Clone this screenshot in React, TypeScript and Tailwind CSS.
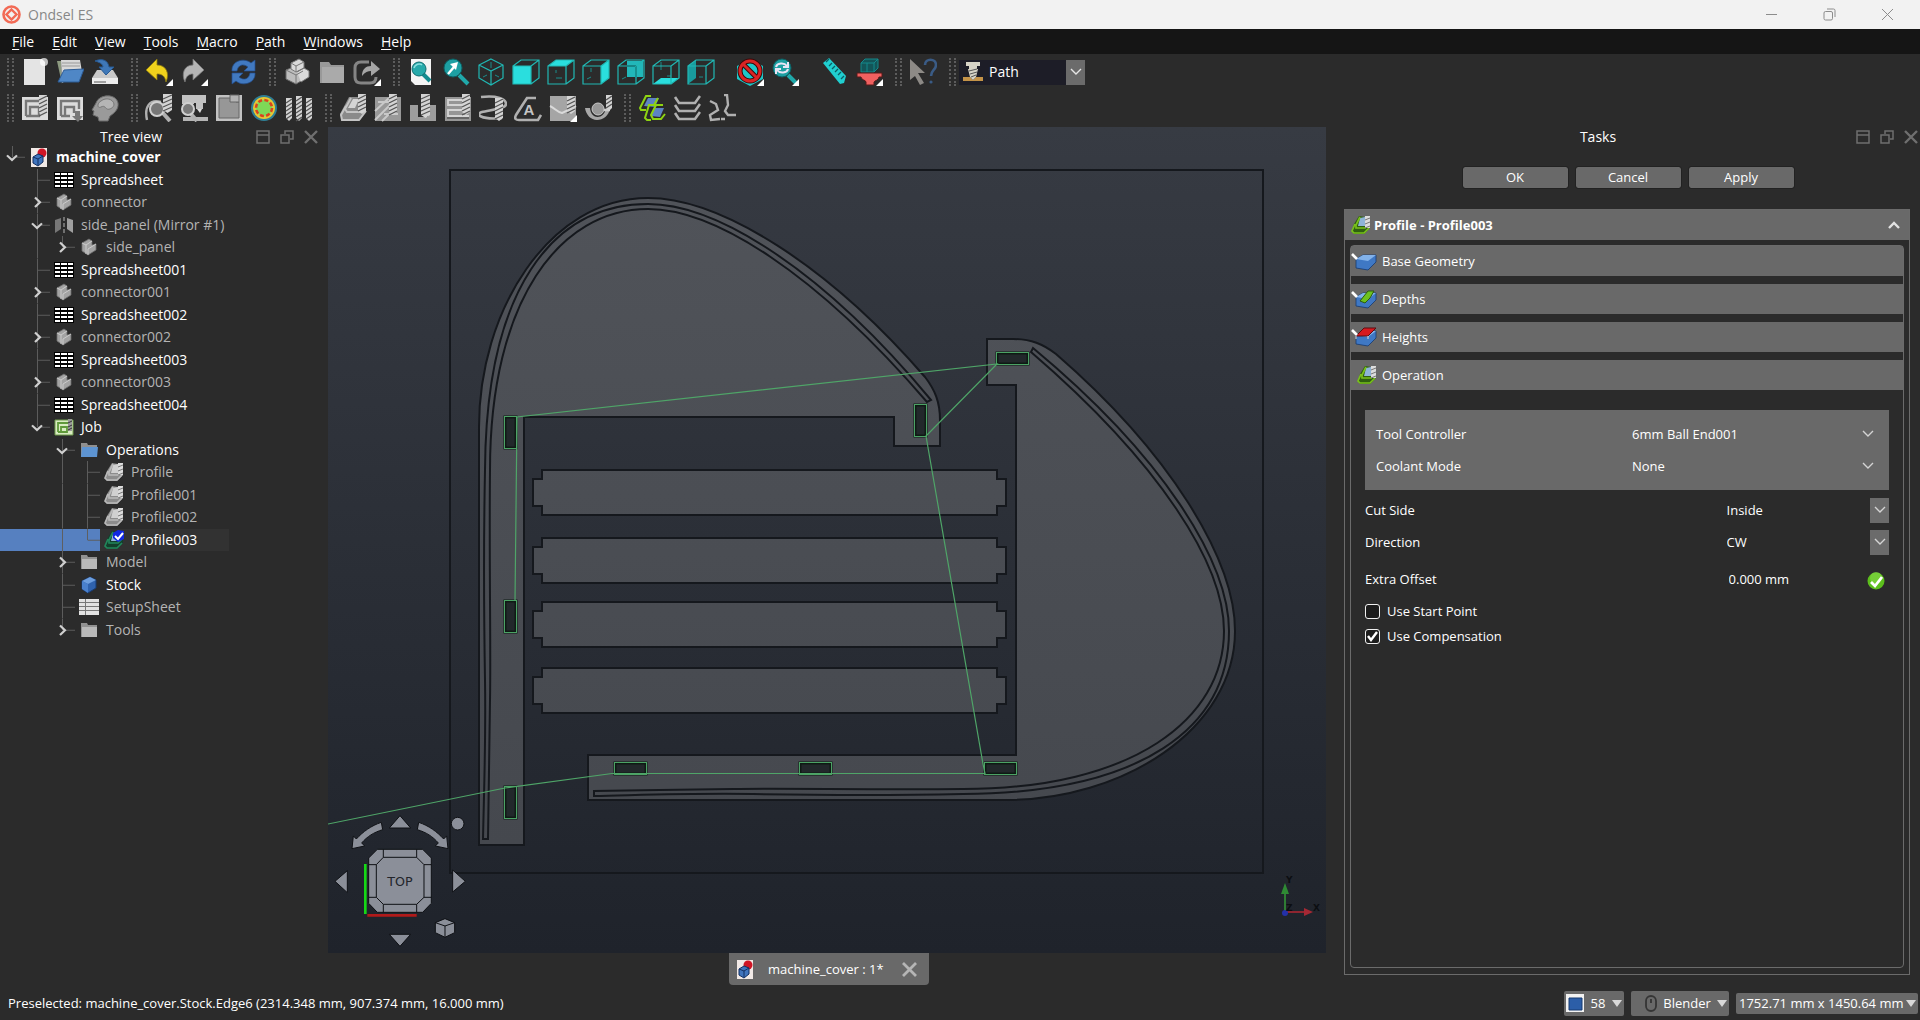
import React from "react";

type Pt = [number, number];

/* ---------- toolbar icons ---------- */

function Svg({ children, size = 28 }: { children: React.ReactNode; size?: number }) {
  return (
    <svg width={size} height={size} viewBox="0 0 28 28" fill="none" aria-hidden="true" className="shrink-0">
      {children}
    </svg>
  );
}

function More() {
  return <path d="M28 21v7h-7z" fill="#fff" />;
}

function Bit({ x, y, h = 17, w = 8 }: { x: number; y: number; h?: number; w?: number }) {
  const lines: React.ReactNode[] = [];
  for (let i = 3; i < h; i += 4) {
    lines.push(<path key={i} d={`M${x} ${y + i + 2}l${w} -4`} stroke="#555" strokeWidth="1.3" />);
  }
  return (
    <g>
      <path d={`M${x} ${y}h${w}v${h - 2}l-${w / 2} 3l-${w / 2} -3z`} fill="#d4d4d4" />
      {lines}
    </g>
  );
}

function Wire({ children }: { children?: React.ReactNode }) {
  return (
    <Svg>
      {children}
      <path d="M1 8h18v18H1zM1 8l8-6h18v18l-8 6M19 8l8-6" stroke="#20b8b4" strokeWidth="1.2" />
    </Svg>
  );
}

const GREY = "#b0b0b0";

const icons: Record<string, React.ReactNode> = {
  new: (
    <Svg>
      <path d="M3 1h18l3 3v23H3z" fill="#e4e4e4" />
      <circle cx="23" cy="4" r="4" fill="#fff" opacity=".7" />
    </Svg>
  ),
  open: (
    <Svg>
      <path d="M1 3h4l1 23z" fill="#8d9a80" />
      <path d="M5 2h19l2 12-20 11z" fill="#d8d8d8" />
      <path d="M6 5h18M6 8h18" stroke="#999" />
      <path d="M8 12l20-1-5 13H2z" fill="#4f87c6" stroke="#2d5c96" />
    </Svg>
  ),
  save: (
    <Svg>
      <path d="M6 12h16l5 8v6H1v-6z" fill="#c9c9c9" />
      <path d="M1 20h26v6H1z" fill="#ececec" />
      <path d="M3 24h12" stroke="#888" strokeWidth="1.5" />
      <path d="M4 3c7-3 13-1 14 6h5l-8 8-7-8h4c0-3-4-5-8-6z" fill="#3f78b8" stroke="#275a94" />
    </Svg>
  ),
  undo: (
    <Svg>
      <path d="M1 12L12 1v6c9 0 13 8 9 17-1-6-4-8-9-8v6z" fill="#f0d21c" stroke="#8b7a10" strokeWidth=".8" />
      <More />
    </Svg>
  ),
  redo: (
    <Svg>
      <path d="M24 12L13 1v6C4 7 1 16 5 24c1-6 4-8 8-8v6z" fill="#b5b5b5" stroke="#777" strokeWidth=".8" />
      <More />
    </Svg>
  ),
  refresh: (
    <Svg>
      <path d="M3 13C2 3 15-1 22 5l4-3v11H15l4-4C14 5 9 7 8 13zM26 15c1 10-12 14-19 8l-4 3V15h11l-4 4c5 4 10 2 11-4z" fill="#4179c0" stroke="#224f8f" strokeWidth=".7" />
    </Svg>
  ),
  part: (
    <Svg>
      <path d="M3 12l10-4 2 6 10 0 0 5-12 7-10-5z" fill="#bdbdbd" stroke="#6b6b6b" />
      <path d="M8 5l8-4 5 3v6l-8 4-5-3zM14 14l7-4 5 3v6l-8 5" fill="#dadada" stroke="#777" />
      <path d="M3 12l10 5v9M13 17l7-4M8 5l5 3 8-4M13 8v6" stroke="#777" />
    </Svg>
  ),
  folder: (
    <Svg>
      <path d="M2 4h9l2 3h13v18H2z" fill="#999" />
      <path d="M4 9h22v16H4z" fill="#aaa" />
    </Svg>
  ),
  export: (
    <Svg>
      <path d="M16 4H8C4 4 2 6 2 10v9c0 4 2 6 6 6h9c4 0 6-2 6-6" stroke="#858585" strokeWidth="3" />
      <path d="M9 18c0-7 4-10 9-10V3l9 8-9 7v-5c-3 0-6 1-9 5z" fill="#a6a6a6" />
      <More />
    </Svg>
  ),
  fitAll: (
    <Svg>
      <path d="M4 1h20v26H7l-3-3z" fill="#f4f4f4" />
      <path d="M4 23l4 4H4z" fill="#333" />
      <path d="M16 16l7 7" stroke="#158c90" strokeWidth="4" />
      <circle cx="12" cy="11" r="7" fill="#26a9aa" stroke="#0f6c70" />
      <path d="M7 10c1-4 6-5 8-3" stroke="#8be0e0" strokeWidth="1.5" />
    </Svg>
  ),
  fitSel: (
    <Svg>
      <path d="M17 17l9 9" stroke="#20a9aa" strokeWidth="4" />
      <circle cx="11" cy="10" r="9" fill="#1d9fa2" stroke="#0c6064" />
      <path d="M6 16l6-7" stroke="#fff" strokeWidth="2.4" />
      <path d="M8 6l8-2-2 8z" fill="#fff" />
    </Svg>
  ),
  iso: (
    <Svg>
      <path d="M14 1l12 6v13l-12 7-12-7V7zM2 7l12 6 12-6M14 13v14" stroke="#20b8b4" strokeWidth="1.2" />
      <path d="M14 4v6M6 19l4-2M22 19l-4-2" stroke="#1b8d8b" />
    </Svg>
  ),
  front: <Wire><path d="M1 8h18v18H1z" fill="#2adede" /></Wire>,
  top: <Wire><path d="M1 8l8-6h18l-8 6z" fill="#2adede" /><path d="M9 20h6M9 12v3" stroke="#1b8d8b" /></Wire>,
  right: <Wire><path d="M19 8l8-6v18l-8 6z" fill="#2adede" /><path d="M5 21l4-2M9 10v4" stroke="#1b8d8b" /></Wire>,
  rear: (
    <Wire>
      <path d="M10 3h16v16H10z" fill="#22b7b9" />
      <path d="M10 8h9v12" stroke="#0c5558" strokeWidth="2" />
      <path d="M5 21l4-2" stroke="#1b8d8b" />
    </Wire>
  ),
  bottom: <Wire><path d="M1 26l8-6h18l-8 6z" fill="#2adede" /><path d="M9 4v8M15 18h4" stroke="#1b8d8b" /></Wire>,
  left: <Wire><path d="M1 8l8-6v18l-8 6z" fill="#199c9e" /><path d="M12 19h4" stroke="#1b8d8b" /></Wire>,
  drawStyle: (
    <Svg>
      <path d="M14 1l13 7v13l-13 7-13-7V8z" fill="#1ec6c8" />
      <circle cx="14" cy="13" r="10" stroke="#3a0808" strokeWidth="5" />
      <path d="M7 6l14 14" stroke="#3a0808" strokeWidth="5" />
      <circle cx="14" cy="13" r="10" stroke="#d92424" strokeWidth="3" />
      <path d="M7 6l14 14" stroke="#d92424" strokeWidth="3" />
      <More />
    </Svg>
  ),
  sync: (
    <Svg>
      <path d="M17 17l9 9" stroke="#20a9aa" strokeWidth="4" />
      <circle cx="11" cy="10" r="9" fill="#1d9fa2" stroke="#0c6064" />
      <path d="M5 9c1-4 8-5 11-1M17 4v5h-5M17 11c-1 4-8 5-11 1M5 16v-5h5" stroke="#e8e4f5" strokeWidth="2" />
      <More />
    </Svg>
  ),
  ruler: (
    <Svg>
      <path d="M3 5l6-5 17 18-2 7-4 1z" fill="#20cfd0" />
      <path d="M9 1l-3 3M12 5l-3 3M15 8l-3 3M18 11l-3 3M21 14l-3 3M24 18l-3 3" stroke="#0a5f66" strokeWidth="1.3" />
    </Svg>
  ),
  clip: (
    <Svg>
      <path d="M6 5l4-4h13v9l-4 4H6z" fill="#135558" stroke="#15898b" />
      <path d="M6 5h13v9M19 5l4-4M12 5v9" stroke="#15898b" />
      <path d="M2 15h25v4h-3c0 3-5 4-5 5v3h-8v-3c0-2-5-2-5-5H2z" fill="#f0605f" stroke="#551a1a" />
      <More />
    </Svg>
  ),
  whats: (
    <Svg>
      <path d="M1 1l15 14H9l6 10-4 2-5-9-5 4z" fill="#8d8a86" />
      <path d="M16 7c0-7 11-7 11 0 0 5-5 5-5 11" stroke="#3a5b85" strokeWidth="2.6" />
      <circle cx="22" cy="24" r="1.6" fill="#3a5b85" />
    </Svg>
  ),
  job: (
    <Svg>
      <path d="M1 3h26v23H1z" fill="#dcdcdc" />
      <path d="M5 22V7h13M9 22v-9h9v9H5" stroke="#777" strokeWidth="2.4" />
      <Bit x={18} y={1} h={20} />
    </Svg>
  ),
  post: (
    <Svg>
      <path d="M1 3h26v23H1z" fill="#dcdcdc" />
      <path d="M5 22V7h18v8M9 22v-9h9v6M5 22h9" stroke="#777" strokeWidth="2.4" />
      <path d="M19 17h5v5h3l-5 6-6-6h3z" fill="#777" />
    </Svg>
  ),
  sanity: (
    <Svg>
      <path d="M5 9C8 0 25-1 27 9c1 7-5 11-8 13l-2 5H8l-1-4-5-2 1-4-2-1z" fill="#9a9a9a" stroke="#6a6a6a" />
      <path d="M10 7c5-4 12-2 13 3 0 4-5 6-7 5s-2-4-6-2-4-4 0-6z" fill="#b5b5b5" stroke="#777" />
    </Svg>
  ),
  inspect: (
    <Svg>
      <path d="M2 26C-1 12 5 5 16 8" stroke={GREY} strokeWidth="2.4" />
      <path d="M17 18l8 9" stroke={GREY} strokeWidth="4" />
      <circle cx="12" cy="15" r="7" fill="#777" stroke="#d0d0d0" strokeWidth="2" />
      <Bit x={18} y={0} h={18} w={9} />
    </Svg>
  ),
  simulate: (
    <Svg>
      <path d="M2 1h12v9H2zM12 1h14v8h-3v6h-7V9h-4z" fill="#c2c2c2" />
      <path d="M17 15h5l-2 4z" fill="#ddd" />
      <path d="M3 23h25v4H3z" fill="#b5b5b5" />
      <path d="M11 20l6 7" stroke={GREY} strokeWidth="4" />
      <circle cx="8" cy="15" r="6" fill="#7a7a7a" stroke="#d0d0d0" strokeWidth="2" />
    </Svg>
  ),
  toolbit: (
    <Svg>
      <path d="M1 1h26v26H1z" fill="#c2c2c2" />
      <path d="M4 4h17v4h3v16H4z" fill="#979797" stroke="#666" />
      <path d="M15 1h9v7h-9z" fill="#b4b4b4" stroke="#666" />
    </Svg>
  ),
  dock: (
    <Svg>
      <circle cx="14" cy="14" r="13" fill="#2f7f96" />
      <circle cx="14" cy="14" r="11" fill="#e8c832" />
      <circle cx="14" cy="14" r="9" fill="#b4d850" />
      <circle cx="14" cy="14" r="8" fill="#7ed957" stroke="#d9431e" strokeWidth="2.6" strokeDasharray="4 2.3" />
    </Svg>
  ),
  bits: (
    <Svg>
      <Bit x={1} y={4} h={22} w={6} />
      <Bit x={11} y={2} h={24} w={6} />
      <Bit x={21} y={4} h={22} w={6} />
    </Svg>
  ),
  profile: (
    <Svg>
      <path d="M10 3L1 20l2 6h18l6-9V8l-8-5z" fill="#8a8a8a" />
      <path d="M12 4L6 15l2 3h13l5-7M7 12L2 21l1 5h17l7-9" stroke="#c4c4c4" strokeWidth="2" />
      <path d="M9 14l5-9h6l-4 9z" fill="#d4d4d4" />
      <Bit x={19} y={0} h={19} />
    </Svg>
  ),
  pocket: (
    <Svg>
      <path d="M1 3h26v24H1z" fill="#999" />
      <path d="M1 17L15 4M1 26L18 9M8 27l12-12M4 8h11M10 20h14" stroke="#c9c9c9" strokeWidth="2" />
      <Bit x={15} y={0} h={20} />
    </Svg>
  ),
  drilling: (
    <Svg>
      <path d="M1 11h8v12h10V11h8v16H1z" fill="#9d9d9d" />
      <Bit x={12} y={0} h={23} w={9} />
    </Svg>
  ),
  face: (
    <Svg>
      <path d="M1 3h26v24H1z" fill="#969696" />
      <path d="M18 6H4v5h15v5H4v6h21" stroke="#d4d4d4" strokeWidth="1.8" />
      <path d="M3 24h22" stroke="#666" strokeWidth="2" />
      <Bit x={18} y={0} h={20} />
    </Svg>
  ),
  helix: (
    <Svg>
      <path d="M2 3c16-2 25 2 25 7S10 16 3 18s-2 8 20 6" stroke={GREY} strokeWidth="2.6" />
      <Bit x={16} y={4} h={22} />
    </Svg>
  ),
  adaptive: (
    <Svg>
      <path d="M22 4H13L2 21c-2 4 0 5 3 5h19l3-5" stroke={GREY} strokeWidth="2.6" />
      <text x="15" y="21" textAnchor="middle" fontSize="15" fontWeight="700" fill="#c4c4c4" fontFamily="Liberation Sans, sans-serif">A</text>
    </Svg>
  ),
  slot: (
    <Svg>
      <path d="M1 2h26v25H1z" fill="#a5a5a5" />
      <path d="M1 12c6 3 7 6 12 7 5-2 8-4 14-7" stroke="#dadada" strokeWidth="2" />
      <Bit x={18} y={2} h={17} />
      <More />
    </Svg>
  ),
  surface: (
    <Svg>
      <path d="M1 14h5c1 12 14 12 16 0h4c-1 8-7 12-13 12S2 21 1 14z" fill="#a8a8a8" />
      <circle cx="14" cy="15" r="6" fill="#999" stroke="#c9c9c9" />
      <path d="M20 16h6" stroke="#ccc" strokeWidth="2.5" />
      <Bit x={22} y={1} h={15} w={6} />
    </Svg>
  ),
  array: (
    <Svg>
      <path d="M6 12l4-8h11l-4 9zM13 22l4-8h9l-4 9z" fill="#5d83c4" />
      <path d="M13 2H8L2 14l1 2h5M20 4l-4 7h-5L7 24l2 2h4M25 11h-7l-5 10 2 4h8l4-5" stroke="#8ed412" strokeWidth="2" />
    </Svg>
  ),
  copyOp: (
    <Svg>
      <path d="M2 3l4 6h16l5-7M2 11l4 6h16l5-7M2 19l4 6h16l5-7" stroke={GREY} strokeWidth="2.6" />
    </Svg>
  ),
  simple: (
    <Svg>
      <path d="M16 1h3l1 10-3 6 3 4h8M2 7l6 3 2 6-8 5 1 5 9-1M13 25h4" stroke={GREY} strokeWidth="2.4" />
    </Svg>
  ),
};

function Grip() {
  return (
    <span className="ml-[5px] flex w-[14px] shrink-0 justify-center gap-[3px] first:ml-[3px]" aria-hidden="true">
      <span className="h-7 border-l-2 border-dotted border-[#5c5c5c]" />
      <span className="h-7 border-l-2 border-dotted border-[#5c5c5c]" />
    </span>
  );
}

function Tools({ names, gapAfter = false }: { names: string[]; gapAfter?: boolean }) {
  return (
    <div className={gapAfter ? "mr-[14px] flex" : "flex"}>
      {names.map((n) => (
        <button key={n} type="button" aria-label={n} className="flex h-8 w-[35px] items-center justify-center">
          {icons[n]}
        </button>
      ))}
    </div>
  );
}

/* ---------- small shared icons ---------- */

function Chevron({ color = "#e6e6e6" }: { color?: string }) {
  return (
    <svg width="12" height="8" viewBox="0 0 12 8" fill="none" aria-hidden="true">
      <path d="M1 1l5 5 5-5" stroke={color} strokeWidth="1.4" />
    </svg>
  );
}

function DocIcon() {
  return (
    <svg width="16" height="19" viewBox="0 0 16 19" aria-hidden="true" className="shrink-0">
      <path d="M0 0h16v19H0z" fill="#f1e9e6" />
      <circle cx="11" cy="5" r="4.5" fill="#d01525" />
      <path d="M2 9l5-3 5 2v6l-5 4-5-3z" fill="#3f74bd" stroke="#132f61" />
      <path d="M2 9l5 2 5-3M7 11v6" stroke="#132f61" fill="none" />
    </svg>
  );
}

function ProfileIcon({ checked = false, grey = false }: { checked?: boolean; grey?: boolean }) {
  const line = grey ? "#b9b9b9" : checked ? "#22865b" : "#79c11b";
  const dark = grey ? "#6f6f6f" : checked ? "#123f2c" : "#2f5f10";
  return (
    <svg width="20" height="20" viewBox="0 0 20 20" fill="none" aria-hidden="true" className="shrink-0">
      <path d="M8 1L3 9l-2 7 2 3h10l6-6V8l-5-6z" fill={grey ? "#8c8c8c" : dark} />
      <path d="M7 11l2-8 5-1v9z" fill={grey ? "#d0d0d0" : "#8fb4d8"} />
      <path d="M9 2L5 10v3h9l4-4M4 9l-3 7 2 2h10l5-5" stroke={line} strokeWidth="1.7" />
      {checked ? (
        <>
          <path d="M9 3l5-3 6 1v8l-6 3-5-4z" fill="#1128e0" />
          <path d="M11 6l3 3 5-6" stroke="#fff" strokeWidth="2" />
        </>
      ) : (
        <>
          <path d="M14 1h5v12h-5z" fill="#dcdcdc" />
          <path d="M14 5l5-2M14 9l5-2M14 13l5-2" stroke="#777" />
        </>
      )}
    </svg>
  );
}

const treeIcons: Record<string, React.ReactNode> = {
  doc: <DocIcon />,
  sheet: (
    <svg width="20" height="16" viewBox="0 0 20 16" aria-hidden="true">
      <path d="M0 0h20v16H0z" fill="#000" />
      <path d="M1 1h5v2H1zM7 1h6v2H7zM14 1h5v2h-5zM1 5h5v2H1zM7 5h6v2H7zM14 5h5v2h-5zM1 9h5v2H1zM7 9h6v2H7zM14 9h5v2h-5zM1 13h5v2H1zM7 13h6v2H7zM14 13h5v2h-5z" fill="#fff" />
    </svg>
  ),
  body: (
    <svg width="16" height="18" viewBox="0 0 16 18" aria-hidden="true">
      <path d="M1 5l7-4 3 2v4l4-1v6l-8 5-6-4z" fill="#a3a3a3" stroke="#6d6d6d" strokeWidth=".8" />
      <path d="M1 5l4 2 6-4M5 7l0 9M7 11l8-5M7 11v6" stroke="#d0d0d0" fill="none" strokeWidth=".9" />
    </svg>
  ),
  mirror: (
    <svg width="20" height="16" viewBox="0 0 20 16" aria-hidden="true">
      <path d="M1 3l6-2v11l-6 4z" fill="#777" />
      <path d="M13 1l6 2v13l-6-4z" fill="#a0a0a0" />
      <path d="M10 0v16" stroke="#888" strokeWidth="1.5" strokeDasharray="4 2" />
    </svg>
  ),
  job: (
    <svg width="20" height="18" viewBox="0 0 20 18" fill="none" aria-hidden="true">
      <path d="M1 2h18v15H1z" fill="#d8ecc0" stroke="#6e9c4c" />
      <path d="M4 14V5h10M7 14V9h6v5H4" stroke="#5f9a3a" strokeWidth="1.8" />
      <path d="M14 1h4v12h-4z" fill="#999" />
      <path d="M14 5l4-2M14 9l4-2M14 12l4-2" stroke="#333" />
    </svg>
  ),
  folderBlue: (
    <svg width="18" height="16" viewBox="0 0 18 16" aria-hidden="true">
      <path d="M1 1h6l1 2h9v12H1z" fill="#8f8f8f" />
      <path d="M2 5h16l-1 10H1z" fill="#5d94d2" />
    </svg>
  ),
  folder: (
    <svg width="18" height="16" viewBox="0 0 18 16" aria-hidden="true">
      <path d="M1 1h6l1 2h9v12H1z" fill="#919191" />
      <path d="M2 5h15v10H2z" fill="#b9b9b9" />
    </svg>
  ),
  profile: <ProfileIcon grey />,
  profileActive: <ProfileIcon checked />,
  stock: (
    <svg width="16" height="18" viewBox="0 0 16 18" aria-hidden="true">
      <path d="M1 5l8-4 6 3v8l-8 5-6-4z" fill="#2f62ad" stroke="#173a70" />
      <path d="M1 5l8-4 6 3-8 4z" fill="#6d9ede" />
      <path d="M1 5l6 3v9l-6-4z" fill="#4a80cc" />
    </svg>
  ),
  setup: (
    <svg width="20" height="16" viewBox="0 0 20 16" aria-hidden="true">
      <path d="M0 0h20v16H0z" fill="#e2e2e2" />
      <path d="M0 3.5h20M0 7.5h20M0 11.5h20M6.5 0v16" stroke="#777" />
    </svg>
  ),
};

/* ---------- tree ---------- */

type Row = { guides: string; icon: string; label: string; dim?: boolean; bold?: boolean; selected?: boolean };

const rows: Row[] = [
  { guides: "w", icon: "doc", label: "machine_cover", bold: true },
  { guides: ".t", icon: "sheet", label: "Spreadsheet" },
  { guides: ".>", icon: "body", label: "connector", dim: true },
  { guides: ".v", icon: "mirror", label: "side_panel (Mirror #1)", dim: true },
  { guides: ".|)", icon: "body", label: "side_panel", dim: true },
  { guides: ".t", icon: "sheet", label: "Spreadsheet001" },
  { guides: ".>", icon: "body", label: "connector001", dim: true },
  { guides: ".t", icon: "sheet", label: "Spreadsheet002" },
  { guides: ".>", icon: "body", label: "connector002", dim: true },
  { guides: ".t", icon: "sheet", label: "Spreadsheet003" },
  { guides: ".>", icon: "body", label: "connector003", dim: true },
  { guides: ".t", icon: "sheet", label: "Spreadsheet004" },
  { guides: ".w", icon: "job", label: "Job" },
  { guides: "..v", icon: "folderBlue", label: "Operations" },
  { guides: "..|t", icon: "profile", label: "Profile", dim: true },
  { guides: "..|t", icon: "profile", label: "Profile001", dim: true },
  { guides: "..|t", icon: "profile", label: "Profile002", dim: true },
  { guides: "..|l", icon: "profileActive", label: "Profile003", selected: true },
  { guides: "..>", icon: "folder", label: "Model", dim: true },
  { guides: "..t", icon: "stock", label: "Stock" },
  { guides: "..t", icon: "setup", label: "SetupSheet", dim: true },
  { guides: "..)", icon: "folder", label: "Tools", dim: true },
];

function Guide({ kind }: { kind: string }) {
  const full = "|t>v".includes(kind);
  const half = "l)w".includes(kind);
  const stub = "tl>)vw".includes(kind);
  return (
    <svg viewBox="0 0 25 24" width="25" preserveAspectRatio="none" className="h-full shrink-0" fill="none" aria-hidden="true">
      {full && <path d="M12.5 0v24" stroke="#5e5e5e" />}
      {half && <path d="M12.5 0v12" stroke="#5e5e5e" />}
      {stub && <path d="M13 12h12" stroke="#5e5e5e" />}
      {">)".includes(kind) && <path d="M10 7l5 5-5 5" stroke="#d0d0d0" strokeWidth="2.2" />}
      {"vw".includes(kind) && <path d="M7 10l5 5 5-5" stroke="#d0d0d0" strokeWidth="2.2" />}
    </svg>
  );
}

function TreeRow({ row }: { row: Row }) {
  const tone = row.dim ? "text-[#b4b4b4]" : "text-white";
  return (
    <li className="flex min-h-0 items-stretch">
      <div className={row.selected ? "flex min-h-0 bg-[#5680c0]" : "flex min-h-0"}>
        {row.guides.split("").map((g, i) => (
          <Guide key={i} kind={g} />
        ))}
      </div>
      <div className={`flex items-center pl-1 text-sm ${tone} ${row.selected ? "bg-[#323232] pr-8" : ""} ${row.bold ? "font-bold" : ""}`}>
        <span className="flex w-5 items-center justify-center">{treeIcons[row.icon]}</span>
        <span className="ml-[7px] whitespace-nowrap leading-5">{row.label}</span>
      </div>
    </li>
  );
}

function DockHeader({ title }: { title: string }) {
  return (
    <header className="flex h-[19px] items-center text-[#6f6f6f]">
      <h2 className="flex-1 text-center text-sm text-white">{title}</h2>
      <div className="flex items-center gap-[10px]">
        <button type="button" aria-label="Collapse">
          <svg width="14" height="14" viewBox="0 0 14 14" fill="none" stroke="currentColor" strokeWidth="1.5">
            <path d="M1 1h12v12H1zM1 5h12" />
          </svg>
        </button>
        <button type="button" aria-label="Float">
          <svg width="14" height="14" viewBox="0 0 14 14" fill="none" stroke="currentColor" strokeWidth="1.5">
            <path d="M5 4V1h8v8h-3M1 5h8v8H1z" />
          </svg>
        </button>
        <button type="button" aria-label="Close">
          <svg width="14" height="14" viewBox="0 0 14 14" fill="none" stroke="currentColor" strokeWidth="2.4">
            <path d="M1 1l12 12M13 1L1 13" />
          </svg>
        </button>
      </div>
    </header>
  );
}

/* ---------- 3D view ---------- */

const panelOutline =
  "M479 845V430C478 310 550 198 648 198C720 198 827 264 925 377C935 390 940 402 940 420V446H894V417H524V845Z";
const panelGroove =
  "M483 839C484 790 486 740 485 680S484 520 485 470C486 290 552 204 648 204C717 204 823 270 931 400L927 402C815 272 714 209 648 209C560 209 490 300 490 470C489 560 491 650 490 700S489 790 488 839Z";

const uprightSlots: Pt[] = [[505, 417], [505, 601], [505, 787], [915, 405]];
const flatSlots: Pt[] = [[615, 763], [800, 763], [985, 763], [997, 353]];
const bars = [470, 538, 602, 668];

function Scene() {
  const edge = { stroke: "#15181d", strokeWidth: 2 };
  return (
    <svg viewBox="328 127 998 826" preserveAspectRatio="xMidYMid slice" className="absolute inset-0 h-full w-full" role="img" aria-label="3D view of machine_cover">
      <defs>
        <linearGradient id="sky" gradientUnits="userSpaceOnUse" x1="0" y1="127" x2="0" y2="953">
          <stop offset="0" stopColor="#373b43" />
          <stop offset="1" stopColor="#1f232b" />
        </linearGradient>
        <linearGradient id="sheet" gradientUnits="userSpaceOnUse" x1="0" y1="200" x2="0" y2="845">
          <stop offset="0" stopColor="#505359" />
          <stop offset="1" stopColor="#45484e" />
        </linearGradient>
        <linearGradient id="sheetTurned" gradientUnits="userSpaceOnUse" x1="1079" y1="0" x2="434" y2="0">
          <stop offset="0" stopColor="#505359" />
          <stop offset="1" stopColor="#45484e" />
        </linearGradient>
      </defs>
      <rect x="328" y="127" width="998" height="826" fill="url(#sky)" />
      <rect x="450" y="170" width="813" height="703" fill="none" {...edge} />
      <g {...edge}>
        <path d={panelOutline} fill="url(#sheet)" />
        <path d={panelGroove} fill="none" />
      </g>
      <g {...edge} transform="matrix(0 -1 -1 0 1433 1279)">
        <path d={panelOutline} fill="url(#sheetTurned)" />
        <path d={panelGroove} fill="none" />
      </g>
      <g fill="url(#sheet)" {...edge}>
        {bars.map((y) => (
          <path key={y} d={`M542 ${y}H997v9h9v27h-9v9H542v-9h-9v-27h9Z`} />
        ))}
      </g>
      <g fill="#22282b" stroke="#0e1a14" strokeWidth="3">
        {uprightSlots.map(([x, y]) => <rect key={`${x}-${y}`} x={x} y={y} width="11" height="31" />)}
        {flatSlots.map(([x, y]) => <rect key={`${x}-${y}`} x={x} y={y} width="31" height="11" />)}
      </g>
      <g fill="none" stroke="#4ba264" strokeWidth="1">
        {uprightSlots.map(([x, y]) => <rect key={`${x}-${y}`} x={x - 0.5} y={y - 0.5} width="12" height="32" />)}
        {flatSlots.map(([x, y]) => <rect key={`${x}-${y}`} x={x - 0.5} y={y - 0.5} width="32" height="12" />)}
      </g>
      <path d="M328 824L505 788L612 773.5H985L983 764L926 436L997 364L517 417L515 601" fill="none" stroke="#4fa568" strokeWidth="1.2" />

      <g transform="translate(320 740) scale(.3333)" fill="#8b8f99" stroke="#0e1014" strokeWidth="3">
        <path d="M240 227l32 37h-64zM45 424l37-32v66zM436 424l-38-34v66zM208 583h64l-32 36z" />
        <circle cx="413" cy="251" r="19" />
        <path d="M96 326l4-38 9 9c20-22 45-40 75-50l4 22c-26 8-46 20-63 40l9 9z" />
        <path d="M384 326l-4-38-9 9c-20-22-45-40-75-50l-4 22c26 8 46 20 63 40l-9 9z" />
        <path d="M172 328H308L334 354V490L308 517H172L146 490V354Z" />
        <path d="M190 352H290L312 374V472L290 493H190L169 472V374ZM190 328v24M290 328v24M146 374h23M312 374h22M146 472h23M312 472h22M190 493v24M290 493v24" />
        <path d="M346 548l29-12 29 12v30l-29 14-29-14z" />
        <path d="M346 548l29 10 29-10M375 558v34" fill="none" />
        <path d="M136 372v150" stroke="#16d816" strokeWidth="8" />
        <path d="M142 526h148" stroke="#b01a1a" strokeWidth="8" />
        <text x="240" y="438" textAnchor="middle" fontSize="38" fontFamily="DejaVu Sans, sans-serif" fill="#22252b" stroke="none">TOP</text>
      </g>

      <path d="M1285 912V892" stroke="#2f7d34" strokeWidth="2" />
      <path d="M1285 883l4 11h-8z" fill="#2f8a34" />
      <path d="M1286 912h20" stroke="#8e2530" strokeWidth="2" />
      <path d="M1313 912l-9-4v8z" fill="#a52834" />
      <circle cx="1285" cy="913" r="3" fill="#2430a8" />
      <g fontFamily="DejaVu Sans, sans-serif" fontSize="9" fill="#0c0e12" fontWeight="700">
        <text x="1286" y="883">Y</text>
        <text x="1286" y="911">Z</text>
        <text x="1313" y="911">X</text>
      </g>
    </svg>
  );
}

/* ---------- task panel ---------- */

function BoxIcon({ kind }: { kind: "base" | "depths" | "heights" | "operation" }) {
  if (kind === "operation") {
    return <span className="flex w-[26px] justify-end"><ProfileIcon /></span>;
  }
  return (
    <svg width="26" height="20" viewBox="0 0 26 20" fill="none" aria-hidden="true">
      <path d="M5 8l7-4h13v7l-8 8-12-2z" fill="#3f78c4" stroke="#173a70" strokeWidth=".8" />
      <path d="M5 8l7-4h13l-8 6z" fill="#82b2ea" />
      {kind === "depths" && <path d="M9 12l8-10h6l-4 7-5 5z" fill="#6ec21e" stroke="#2c5c10" />}
      {kind === "heights" && (
        <>
          <path d="M5 9l8-8h12l-8 8z" fill="#d81a20" stroke="#5c0d10" />
          <path d="M5 9v3M17 9v3" stroke="#ddd" />
        </>
      )}
      <path d="M1 3l5 5" stroke="#fff" strokeWidth="2.6" />
    </svg>
  );
}

function Section({ kind, title }: { kind: "base" | "depths" | "heights" | "operation"; title: string }) {
  return (
    <button type="button" className="flex h-[30px] w-full items-center gap-[5px] bg-[#696969] text-left">
      <BoxIcon kind={kind} />
      {title}
    </button>
  );
}

function SelectRow({ id, label, value, framed }: { id: string; label: string; value: string; framed: boolean }) {
  return (
    <div className="flex h-8 items-center">
      <label htmlFor={id} className={framed ? "w-[51%]" : "w-[69%]"}>{label}</label>
      <div className={framed ? "relative h-[25px] flex-1 bg-[#696969]" : "relative h-[25px] flex-1"}>
        <select id={id} defaultValue={value} className={framed ? "h-full w-full appearance-none bg-[#696969] outline-none" : "h-full w-full appearance-none bg-[#2b2b2b] outline-none"}>
          <option>{value}</option>
        </select>
        <span className={framed ? "pointer-events-none absolute inset-y-0 right-0 flex w-5 items-center justify-center" : "pointer-events-none absolute inset-y-0 right-0 flex w-[19px] items-center justify-center bg-[#6b6b6b]"}>
          <Chevron color="#d4d4d4" />
        </span>
      </div>
    </div>
  );
}

function Check({ id, label, on }: { id: string; label: string; on: boolean }) {
  return (
    <div className="flex h-[25px] items-center gap-[7px]">
      <span className="relative flex h-[15px] w-[15px]">
        <input id={id} type="checkbox" defaultChecked={on} className="peer h-[15px] w-[15px] appearance-none rounded-[3px] border border-[#f0f0f0] bg-[#1c1c1c]" />
        <svg viewBox="0 0 15 15" fill="none" aria-hidden="true" className="pointer-events-none absolute inset-0 hidden peer-checked:block">
          <path d="M3 7l3 4 6-8" stroke="#fff" strokeWidth="2.4" />
        </svg>
      </span>
      <label htmlFor={id}>{label}</label>
    </div>
  );
}

function TaskPanel() {
  return (
    <aside className="flex w-[594px] shrink-0 flex-col pr-[2px] pl-[14px] text-[13px] text-white">
      <DockHeader title="Tasks" />
      <div className="mt-[21px] flex justify-center gap-2 pr-[2px]">
        {["OK", "Cancel", "Apply"].map((t) => (
          <button key={t} type="button" className="h-[21px] w-[105px] rounded-[2px] bg-[#696969] leading-[21px] outline-1 outline-[#222]">{t}</button>
        ))}
      </div>
      <section className="mt-[21px] mr-2 mb-[11px] ml-1 flex flex-1 flex-col border border-[#6b6b6b]">
        <button type="button" className="flex h-[30px] items-center bg-[#696969] pr-2 pl-[6px] text-left font-bold">
          <ProfileIcon />
          <span className="ml-[3px] flex-1">Profile - Profile003</span>
          <svg width="13" height="10" viewBox="0 0 13 10" fill="none" aria-hidden="true">
            <path d="M1 8l5-5 5 5" stroke="#e2e2e2" strokeWidth="2.4" />
          </svg>
        </button>
        <div className="mx-[5px] mt-[5px] mb-[6px] flex flex-1 flex-col rounded-[4px] border border-[#6b6b6b]">
          <div className="flex flex-col gap-2">
            <Section kind="base" title="Base Geometry" />
            <Section kind="depths" title="Depths" />
            <Section kind="heights" title="Heights" />
            <Section kind="operation" title="Operation" />
          </div>
          <form className="mx-[14px] mt-5">
            <div className="h-20 bg-[#696969] px-[11px] pt-[8px]">
              <SelectRow id="tc" label="Tool Controller" value="6mm Ball End001" framed />
              <SelectRow id="coolant" label="Coolant Mode" value="None" framed />
            </div>
            <div className="mt-1">
              <SelectRow id="side" label="Cut Side" value="Inside" framed={false} />
              <SelectRow id="dir" label="Direction" value="CW" framed={false} />
            </div>
            <div className="mt-[5px] flex h-8 items-center">
              <label htmlFor="offset" className="w-[69%]">Extra Offset</label>
              <input id="offset" defaultValue="0.000 mm" className="min-w-0 flex-1 bg-transparent pl-[2px] outline-none" />
              <svg width="18" height="18" viewBox="0 0 18 18" fill="none" className="mt-1 mr-1" aria-hidden="true">
                <circle cx="9" cy="9" r="8.5" fill="#5cbf1c" />
                <circle cx="9" cy="6" r="6" fill="#86d84a" opacity=".6" />
                <path d="M4 10l4 4 7-9" stroke="#fff" strokeWidth="2.8" />
              </svg>
            </div>
            <div className="mt-1">
              <Check id="start" label="Use Start Point" on={false} />
              <Check id="comp" label="Use Compensation" on />
            </div>
          </form>
        </div>
      </section>
    </aside>
  );
}

/* ---------- window ---------- */

function Caret() {
  return (
    <svg width="10" height="7" viewBox="0 0 10 7" aria-hidden="true">
      <path d="M0 0h10L5 7z" fill="#d8d8d8" />
    </svg>
  );
}

const menus = ["File", "Edit", "View", "Tools", "Macro", "Path", "Windows", "Help"];

export default function App() {
  return (
    <div className="flex h-screen flex-col overflow-hidden bg-[#2b2b2b] font-['Open_Sans','Noto_Sans',sans-serif] text-sm text-white">
      <div className="flex h-[29px] shrink-0 items-center bg-[#f2f2f2] pr-1 pl-[2px] text-[#878787]">
        <svg width="19" height="19" viewBox="0 0 19 19" fill="none" aria-hidden="true">
          <circle cx="9.5" cy="9.5" r="8" stroke="#f26a55" strokeWidth="2.6" />
          <path d="M9.5 4.5l5 5-5 5-5-5z" stroke="#f26a55" strokeWidth="2.4" />
        </svg>
        <span className="ml-[7px] flex-1">Ondsel ES</span>
        <div className="flex text-[#8c8c8c]">
          <button type="button" aria-label="Minimize" className="flex w-[58px] justify-center">
            <svg width="13" height="13" viewBox="0 0 13 13" stroke="currentColor"><path d="M1 6.5h11" /></svg>
          </button>
          <button type="button" aria-label="Restore" className="flex w-[58px] justify-center">
            <svg width="13" height="13" viewBox="0 0 13 13" fill="none" stroke="currentColor"><rect x="1" y="3.5" width="8.5" height="8.5" rx="1.5" /><path d="M4 1h6.5q1.5 0 1.5 1.5V9" /></svg>
          </button>
          <button type="button" aria-label="Close" className="flex w-[58px] justify-center">
            <svg width="13" height="13" viewBox="0 0 13 13" stroke="currentColor"><path d="M1 1l11 11M12 1L1 12" /></svg>
          </button>
        </div>
      </div>

      <nav className="flex h-[25px] shrink-0 items-center gap-[18px] bg-[#151515] pl-3">
        {menus.map((m) => (
          <button key={m} type="button" className="leading-5">
            <span className="underline decoration-1 underline-offset-2">{m[0]}</span>{m.slice(1)}
          </button>
        ))}
      </nav>

      <div className="flex h-9 shrink-0 items-center">
        <Grip />
        <Tools names={["new", "open", "save"]} />
        <Grip />
        <Tools names={["undo", "redo"]} gapAfter />
        <Tools names={["refresh"]} />
        <Grip />
        <Tools names={["part", "folder", "export"]} />
        <Grip />
        <Tools names={["fitAll", "fitSel", "iso", "front", "top", "right", "rear", "bottom", "left"]} gapAfter />
        <Tools names={["drawStyle", "sync"]} gapAfter />
        <Tools names={["ruler", "clip"]} />
        <Grip />
        <Tools names={["whats"]} />
        <Grip />
        <div className="relative flex h-[25px] w-[126px] items-center bg-[#1d1d27]">
          <svg width="20" height="20" viewBox="0 0 20 20" aria-hidden="true" className="pointer-events-none absolute left-1">
            <path d="M0 15h7l3 3 3-3h7v4H0z" fill="#c49348" />
            <path d="M3 0h14v4h-3v3h1l-2 8-3 3-3-3-2-8h1V4H3z" fill="#d6d3c6" />
            <path d="M6 9l8-2M7 12l7-2M8 15l5-2" stroke="#555" />
          </svg>
          <select aria-label="Workbench" defaultValue="Path" className="h-full w-full appearance-none bg-transparent pl-[30px] outline-none">
            <option>Path</option>
          </select>
          <span className="pointer-events-none absolute inset-y-0 right-0 flex w-[19px] items-center justify-center bg-[#6b6b6b]"><Chevron /></span>
        </div>
      </div>
      <div className="flex h-[37px] shrink-0 items-center pb-px">
        <Grip />
        <Tools names={["job", "post", "sanity"]} />
        <Grip />
        <Tools names={["inspect", "simulate", "toolbit", "dock", "bits"]} />
        <Grip />
        <Tools names={["profile", "pocket", "drilling", "face", "helix", "adaptive", "slot", "surface"]} />
        <Grip />
        <Tools names={["array", "copyOp", "simple"]} />
      </div>

      <div className="flex min-h-0 flex-1">
        <aside className="w-[328px] shrink-0">
          <div className="pr-[10px] pl-[6px]"><DockHeader title="Tree view" /></div>
          <ul className="grid h-[495px] auto-rows-fr">
            {rows.map((r) => <TreeRow key={r.label} row={r} />)}
          </ul>
        </aside>
        <main className="flex min-w-0 flex-1 flex-col">
          <div className="relative min-h-0 flex-1"><Scene /></div>
          <div className="flex h-[33px] justify-center pl-1">
            <div className="flex h-8 w-[200px] items-center rounded-b-[4px] bg-[#696969] pr-3 pl-2 text-[13px]">
              <DocIcon />
              <span className="ml-[15px] flex-1 whitespace-nowrap">machine_cover : 1*</span>
              <button type="button" aria-label="Close tab">
                <svg width="15" height="15" viewBox="0 0 15 15" stroke="#b5b5b5" strokeWidth="2.8"><path d="M1 1l13 13M14 1L1 14" /></svg>
              </button>
            </div>
          </div>
        </main>
        <TaskPanel />
      </div>

      <footer className="flex h-[34px] shrink-0 items-center pr-[2px] pl-2 text-[13px]">
        <span className="flex-1">Preselected: machine_cover.Stock.Edge6 (2314.348 mm, 907.374 mm, 16.000 mm)</span>
        <div className="flex items-center gap-[7px] whitespace-nowrap">
          <button type="button" className="flex h-[25px] w-[60px] items-center justify-between rounded-[2px] bg-[#696969] px-[2px]">
            <svg width="18" height="18" viewBox="0 0 18 18" aria-hidden="true"><path d="M0 0h18v18H0z" fill="#f2f2f2" /><path d="M3 4h13v12H3z" fill="#2c5ea8" stroke="#173a70" /></svg>
            58
            <Caret />
          </button>
          <button type="button" className="flex h-[25px] w-[98px] items-center justify-between rounded-[2px] bg-[#696969] pr-[2px] pl-[14px]">
            <svg width="12" height="17" viewBox="0 0 12 17" fill="none" stroke="#353535" strokeWidth="1.8" aria-hidden="true"><rect x="1" y="1" width="10" height="15" rx="5" /><path d="M6 4v4" /></svg>
            Blender
            <Caret />
          </button>
          <button type="button" className="flex h-[21px] w-[182px] items-center justify-between rounded-[2px] bg-[#696969] pr-[2px] pl-[3px]">
            1752.71 mm x 1450.64 mm
            <Caret />
          </button>
        </div>
      </footer>
    </div>
  );
}
